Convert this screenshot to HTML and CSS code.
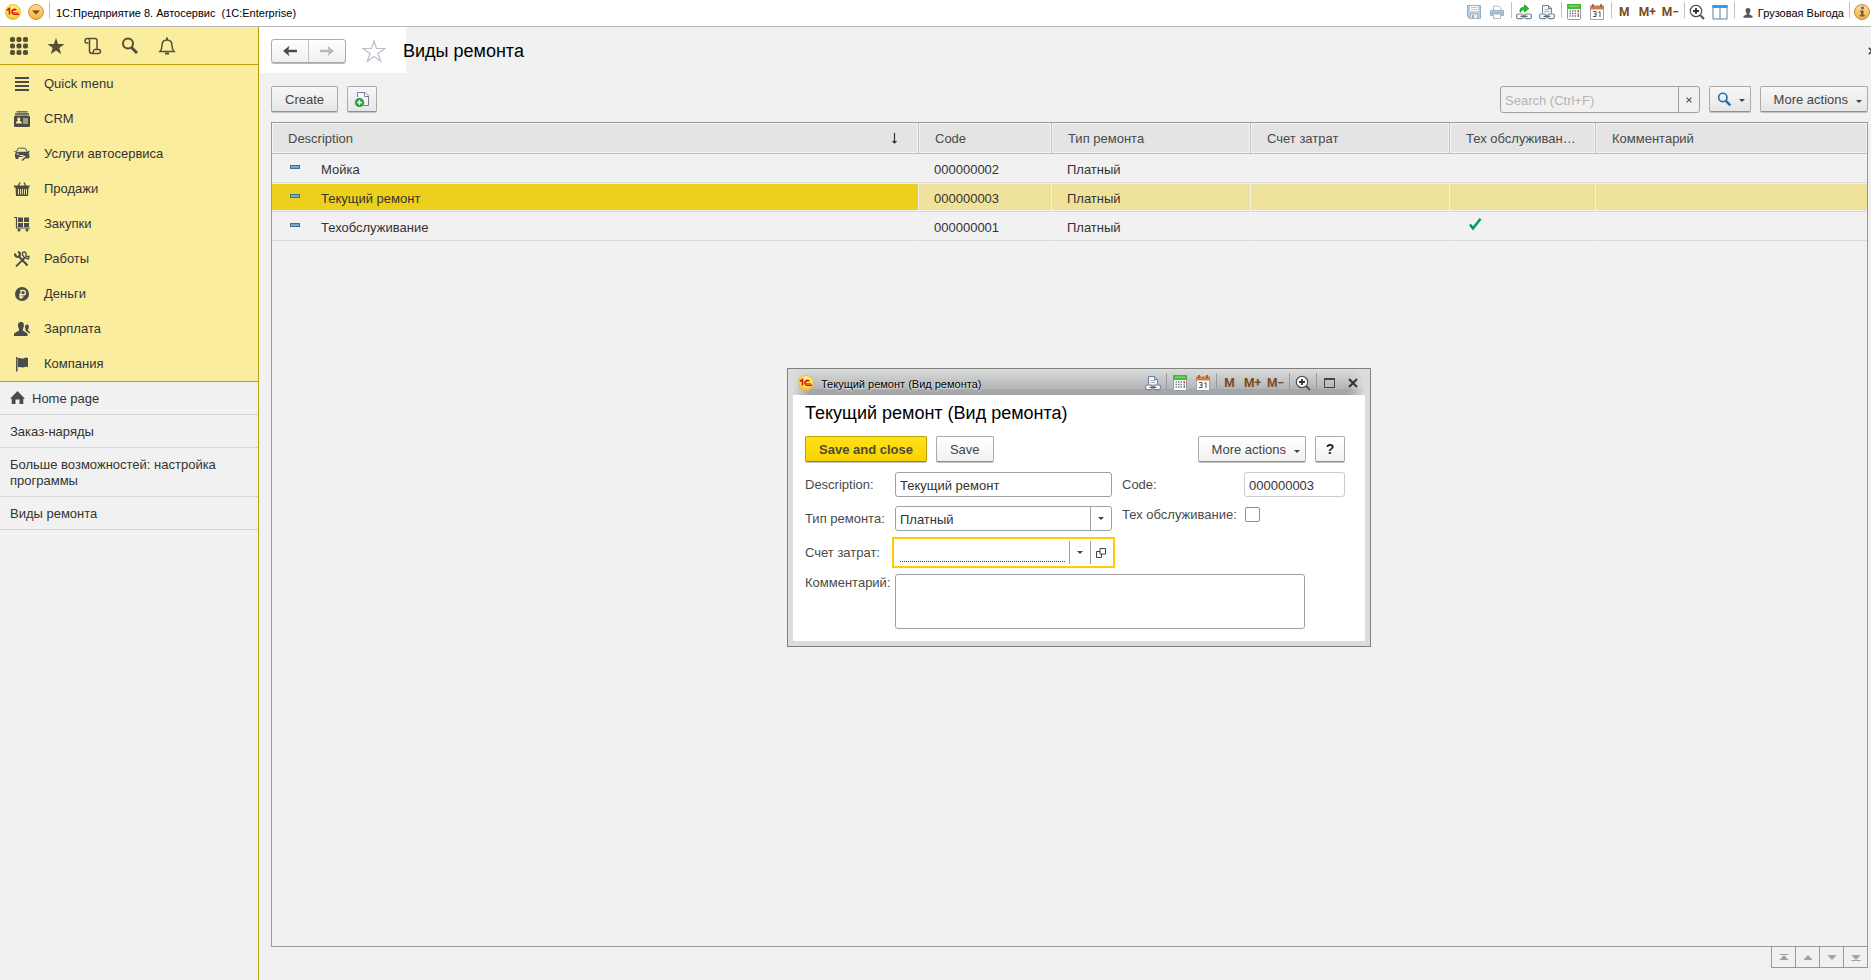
FILE: index.html
```html
<!DOCTYPE html>
<html lang="ru">
<head>
<meta charset="utf-8">
<title>1С:Предприятие 8. Автосервис</title>
<link rel="stylesheet" href="styles.css">
</head>
<body>
<svg class="defs" aria-hidden="true">
  <defs>
    <radialGradient id="gold" cx="50%" cy="35%" r="65%"><stop offset="0" stop-color="#fffbb0"/><stop offset=".6" stop-color="#ffe64a"/><stop offset="1" stop-color="#f0b428"/></radialGradient>
    <linearGradient id="amber" x1="0" y1="0" x2="0" y2="1"><stop offset="0" stop-color="#ffdc90"/><stop offset="1" stop-color="#f5ae45"/></linearGradient>
    <symbol id="i-logo" viewBox="0 0 16 16"><circle cx="8" cy="8" r="7.5" fill="url(#gold)" stroke="#e3c04c"/><path d="M2 6.200L4.500 4.500V10.500" fill="none" stroke="#e01010" stroke-width="1.700"/><path d="M11.300 6.300A2.500 2.500 0 1 0 8.800 10.300H14" fill="none" stroke="#e01010" stroke-width="1.500"/><path d="M10 7A1.200 1.200 0 1 0 9 8.700H13" fill="none" stroke="#e01010" stroke-width=".8"/></symbol>
    <symbol id="i-drop" viewBox="0 0 16 16"><circle cx="8" cy="8" r="7.500" fill="url(#amber)" stroke="#c99645"/><path d="M4 6.500h8L8 10.500z" fill="#704a20"/></symbol>
    <symbol id="i-save" viewBox="0 0 16 16"><path d="M1.500 1.500h13v13h-11l-2-2z" fill="#b9cfe4" stroke="#96adc4"/><path d="M4 2h8v5H4z" fill="#fff"/><path d="M5 3.500h6M5 5.500h6" stroke="#b6c3d0"/><path d="M4.500 10h7v4.500h-7z" fill="#edf2f7" stroke="#a2b5c8"/><path d="M6 11h2v3H6z" fill="#9cb1c8"/></symbol>
    <symbol id="i-print" viewBox="0 0 16 16"><path d="M4.500 7V2h5l2.500 2.500V7" fill="#fff" stroke="#a9bac8"/><path d="M1.500 6.500h13v5h-13z" fill="#b6c9d8" stroke="#9cafbf"/><path d="M4.500 10h7v4.500h-7z" fill="#fff" stroke="#a9bac8"/><path d="M1 9h14" stroke="#93a9ba"/></symbol>
    <symbol id="i-golink" viewBox="0 0 16 16"><rect x=".6" y="10" width="6.600" height="4.600" rx="1.500" fill="#fff" stroke="#718196" stroke-width="1.200"/><rect x="8.800" y="10" width="6.600" height="4.600" rx="1.500" fill="#fff" stroke="#718196" stroke-width="1.200"/><path d="M4.500 12.300h7" stroke="#526478" stroke-width="1.300"/><path d="M4 8C3.500 4 6 3.200 8.500 3.200V.8L12.800 4.500 8.500 8V5.800C6.500 5.600 5 6 4.800 8z" fill="#24c524" stroke="#168a16" stroke-width=".8"/></symbol>
    <symbol id="i-doclink" viewBox="0 0 16 16"><path d="M3.500 9.500V1.500h6L12.500 4.500V9.500" fill="#f5f8fb" stroke="#718196"/><path d="M9.500 1.500v3h3" fill="none" stroke="#718196"/><path d="M5.500 5.500h5M5.500 7.500h5" stroke="#a7b4c2"/><rect x=".6" y="10" width="6.600" height="4.600" rx="1.500" fill="#fff" stroke="#718196" stroke-width="1.200"/><rect x="8.800" y="10" width="6.600" height="4.600" rx="1.500" fill="#fff" stroke="#718196" stroke-width="1.200"/><path d="M4.500 12.300h7" stroke="#526478" stroke-width="1.300"/></symbol>
    <symbol id="i-calc" viewBox="0 0 16 16"><rect x="1.500" y=".5" width="13" height="15" rx="1" fill="#fff" stroke="#8f9ba5"/><path d="M1 0h14v5H1z" fill="#45b83c"/><path d="M3 1.500h10v1.500H3z" fill="#74dc64"/><g stroke="#73808b" stroke-width="1.500" stroke-dasharray="1.500 1"><path d="M3.500 7h7M3.500 9.500h7M3.500 12h7"/></g><path d="M11.500 6h1.500v2.500h-1.500z" fill="#ee3b2b"/><path d="M11.500 9.500h1.500V13h-1.500z" fill="#73808b"/></symbol>
    <symbol id="i-cal" viewBox="0 0 16 16"><path d="M1.500 3.500h13v12h-13z" fill="#fff" stroke="#9aa5b0"/><path d="M1 1.500h14v4H1z" fill="#c8814e"/><path d="M4 0v3M12 0v3" stroke="#8d5228" stroke-width="1.500"/><path d="M4 7.500h3v2.500H5M7 10v2.500H4M9.500 8.500l1.500-1v5.500" fill="none" stroke="#49545e"/></symbol>
    <symbol id="i-zoom" viewBox="0 0 16 16"><circle cx="7" cy="7" r="5.700" fill="#fff" stroke="#505050" stroke-width="1.200"/><path d="M4 7h6M7 4v6" stroke="#303030" stroke-width="1.800"/><path d="M11.300 11.300L15 15" stroke="#505050" stroke-width="2"/></symbol>
    <symbol id="i-panes" viewBox="0 0 16 16"><path d="M1 1.500h14v13.500H1z" fill="#fff" stroke="#62809a"/><path d="M8 3v12" stroke="#62809a"/><path d="M.5 1h15v3H.5z" fill="#2d9cf0"/></symbol>
    <symbol id="i-user" viewBox="0 0 10 10"><path d="M5 0C7 0 7.800 1.500 7.300 3.500L6.300 5.500v1L9.500 8V9.800H.5V8L3.700 6.500V5.500L2.700 3.500C2.200 1.500 3 0 5 0z" fill="#575757"/></symbol>
    <symbol id="i-info" viewBox="0 0 16 16"><circle cx="8" cy="8" r="7.500" fill="url(#amber)" stroke="#c08a35"/><circle cx="8.500" cy="4" r="1.400" fill="#5f6064"/><path d="M6.300 6.500h3.200V11h1.200v1.500H5.800V11H7V8h-.8z" fill="#5f6064"/></symbol>
    <symbol id="i-grid" viewBox="0 0 18 18"><g fill="#564f36"><rect x="0" y="0" width="5" height="5" rx="1.800"/><rect x="6.500" y="0" width="5" height="5" rx="1.800"/><rect x="13" y="0" width="5" height="5" rx="1.800"/><rect x="0" y="6.500" width="5" height="5" rx="1.800"/><rect x="6.500" y="6.500" width="5" height="5" rx="1.800"/><rect x="13" y="6.500" width="5" height="5" rx="1.800"/><rect x="0" y="13" width="5" height="5" rx="1.800"/><rect x="6.500" y="13" width="5" height="5" rx="1.800"/><rect x="13" y="13" width="5" height="5" rx="1.800"/></g></symbol>
    <symbol id="i-star" viewBox="0 0 18 18"><path d="M9 1l2.100 6H17.500l-5.200 3.900 2 6.300L9 13.400 3.700 17.200l2-6.300L.5 7H6.900z" fill="#564f36"/></symbol>
    <symbol id="i-scroll" viewBox="0 0 18 18"><path d="M4.500 6H2.500C.5 6 .5 1.500 3 1.500H11C12.500 1.500 13 2.500 13 4V12M5 2C6 3 5.500 5 5.500 6.500V14C5.500 16 6.500 16.500 8 16.500H14.500C17 16.500 17 12.500 15 12.500H10.500C9.500 12.500 9.500 15.500 8.500 16.300" fill="none" stroke="#564f36" stroke-width="1.500"/></symbol>
    <symbol id="i-search" viewBox="0 0 18 18"><circle cx="7" cy="6.500" r="5" fill="none" stroke="currentColor" stroke-width="2"/><path d="M10.500 10.500L16 16" stroke="currentColor" stroke-width="3"/></symbol>
    <symbol id="i-bell" viewBox="0 0 18 18"><path d="M2 14.500C4 12.500 4 11 4 8.500 4 4.500 6 3 9 3s5 1.500 5 5.500c0 2.500 0 4 2 6z" fill="none" stroke="#564f36" stroke-width="1.500"/><path d="M9 .500V3M7 16.500h4" stroke="#564f36" stroke-width="2"/></symbol>
    <symbol id="i-lines" viewBox="0 0 16 16"><path d="M1 2h14M1 6h14M1 10h14M1 14h14" stroke="#4b4b4b" stroke-width="1.800"/></symbol>
    <symbol id="i-crm" viewBox="0 0 16 16"><path d="M2.500 .8h11M1 3h14" stroke="#4b4b4b" stroke-width="1.300"/><rect x="0" y="4.500" width="16" height="11.500" rx="1.500" fill="#4b4b4b"/><path d="M4.800 6.500c1.800 0 1.800 2.300 1 3.300l2 1.200v1.500H2V11l1.800-1.200c-.8-1-.8-3.300 1-3.300z" fill="#fcec9c"/><path d="M9 8h5M9 10h5M9 12h5" stroke="#fcec9c"/></symbol>
    <symbol id="i-car" viewBox="0 0 16 16"><path d="M2.500 5.500L4 2.500C4.500 2 11 2 11.500 2.500L13 5.500" fill="none" stroke="#4b4b4b"/><path d="M0 4.500l2 1.300h11l2.500-1.300V6L14.500 7.500l1 1-1 2.500-3-1.500-4 1.500H4.500v2H1.500v-2L1 11V8l1-1.500L0 5.500z" fill="#4b4b4b"/><path d="M8 14.500l4-3.500M11 9.500c1.500-.5 2 1 1.500 2 1 .500 2.500 0 2.800-1.200" fill="none" stroke="#4b4b4b" stroke-width="1.500"/><path d="M2.500 8h2.500M5.500 9.500h4" stroke="#fcec9c"/></symbol>
    <symbol id="i-basket" viewBox="0 0 16 16"><path d="M4 5.500L6 1.500M12 5.500L10 1.500" stroke="#4b4b4b" stroke-width="1.300"/><path d="M0 4.500h15.500v2H14.500L14 15H2L1.500 6.500H0z" fill="#4b4b4b"/><path d="M4.500 8v5.500M6.500 8v5.500M8.500 8v5.500M10.500 8v5.500M12.500 8v5.500" stroke="#fcec9c" stroke-width=".9"/></symbol>
    <symbol id="i-cart" viewBox="0 0 16 16"><path d="M0 1.500h2.500v10.500H16" fill="none" stroke="#4b4b4b" stroke-width="1.200"/><path d="M4 1.500h5v4.500H4zM10 1.500h5v4.500h-5zM4 7h5v4H4zM10 7h5v4h-5z" fill="#4b4b4b"/><circle cx="5" cy="14" r="1.500" fill="#4b4b4b"/><circle cx="13" cy="14" r="1.500" fill="#4b4b4b"/></symbol>
    <symbol id="i-tools" viewBox="0 0 16 16"><path d="M1 2.500C.8 5 3 6.500 5 5.500L13.500 14.500M4 .800C6 1.500 6.500 3.500 5.300 5.200" fill="none" stroke="#4b4b4b" stroke-width="2.200"/><path d="M2 15.500L10.500 7" stroke="#4b4b4b" stroke-width="1.800"/><path d="M8.500 4V1.500L10.500 .8 12 2v3.500L15 5.500 14.500 8 12 7.500 10 6z" fill="none" stroke="#4b4b4b" stroke-width="1.300"/></symbol>
    <symbol id="i-rub" viewBox="0 0 16 16"><circle cx="8" cy="8" r="7" fill="#4b4b4b"/><path d="M7 13V4.500h2.200c3 0 3 4.300 0 4.300H5M5 11h4.500" fill="none" stroke="#fcec9c" stroke-width="1.400"/></symbol>
    <symbol id="i-people" viewBox="0 0 16 16"><path d="M7 1c3 0 3.200 2.500 2.700 5L8.800 8v1.500L13.500 12.500V15H0V12.500L5 9.500V8L4.200 6C3.700 3.500 4 1 7 1zM13 3.500c2 0 2 2 1.700 3.500L14 8.500V9.500l2 1.500v1.500L12.500 10.500l-1-1V8l-.5-2c-.3-1 .5-2.500 2-2.500z" fill="#4b4b4b"/></symbol>
    <symbol id="i-flag" viewBox="0 0 16 16"><path d="M2.800 1v14.500" stroke="#4b4b4b" stroke-width="1.500"/><path d="M4 2.200c2-1 3.700 1.300 6 0 1.500-1 3-.8 4 0v9c-1.500-.8-2.800-.5-4 0-2 1-4-1-6 .3z" fill="#4b4b4b"/></symbol>
    <symbol id="i-home" viewBox="0 0 15 14"><path d="M7.500 0L15 7.800H13.300V13H9.500V8.500h-4V13H1.700V7.800H0z" fill="#4b4b4b"/></symbol>
    <symbol id="i-back" viewBox="0 0 16 12"><path d="M1 6L7.500 .8 6.300 4.700H15v2.600H6.300L7.500 11.200z" fill="currentColor"/></symbol>
    <symbol id="i-fav" viewBox="0 0 24 24"><path d="M12 2l2.500 7.500H23l-7 5 2.700 7.700L12 17.500l-6.700 4.700L8 14.500l-7-5h8.500z" fill="#fff" stroke="#b9bfc5" stroke-width="1.200"/></symbol>
    <symbol id="i-copy" viewBox="0 0 16 16"><path d="M3.500 6V1.500h7.500L14.500 5v9.500H9" fill="#f5f7fa" stroke="#6f8094"/><path d="M10.500 1.500V5.500h4" fill="#fff" stroke="#6f8094"/><circle cx="5.500" cy="11.500" r="4.300" fill="#26a339" stroke="#158428" stroke-width=".6"/><path d="M3 11.500h5M5.500 9v5" stroke="#fff" stroke-width="1.300"/></symbol>
    <symbol id="i-check" viewBox="0 0 14 14"><path d="M2 7.500L5 11.500 12.500 1.800" fill="none" stroke="#009c4f" stroke-width="2.500"/></symbol>
    <symbol id="i-x" viewBox="0 0 10 10"><path d="M1 1l8 8M9 1L1 9" stroke="currentColor" stroke-width="2"/></symbol>
    <symbol id="i-open" viewBox="0 0 10 10"><path d="M4 .5h5.500V6H4zM4 3.500H.500v6h5V6" fill="none" stroke="#404040"/></symbol>
  </defs>
</svg>

<header class="topbar">
  <svg class="i16"><use href="#i-logo"/></svg>
  <button class="icon-btn" aria-label="Меню"><svg class="i16"><use href="#i-drop"/></svg></button>
  <span class="sep"></span>
  <span class="app-title">1С:Предприятие 8. Автосервис&nbsp; (1C:Enterprise)</span>
  <nav class="tools">
    <button class="icon-btn" aria-label="Save"><svg class="i16"><use href="#i-save"/></svg></button>
    <button class="icon-btn" aria-label="Print"><svg class="i16"><use href="#i-print"/></svg></button>
    <span class="sep"></span>
    <button class="icon-btn" aria-label="Go to link"><svg class="i16"><use href="#i-golink"/></svg></button>
    <button class="icon-btn" aria-label="Get link"><svg class="i16"><use href="#i-doclink"/></svg></button>
    <span class="sep"></span>
    <button class="icon-btn" aria-label="Calculator"><svg class="i16"><use href="#i-calc"/></svg></button>
    <button class="icon-btn" aria-label="Calendar"><svg class="i16"><use href="#i-cal"/></svg></button>
    <span class="sep"></span>
    <button class="icon-btn mem">M</button>
    <button class="icon-btn mem">M+</button>
    <button class="icon-btn mem">M−</button>
    <span class="sep"></span>
    <button class="icon-btn" aria-label="Zoom"><svg class="i16"><use href="#i-zoom"/></svg></button>
    <button class="icon-btn" aria-label="Panels"><svg class="i16"><use href="#i-panes"/></svg></button>
    <span class="sep"></span>
    <button class="user"><svg class="i10"><use href="#i-user"/></svg>Грузовая Выгода</button>
    <span class="sep"></span>
    <button class="icon-btn info" aria-label="Info"><svg class="i16"><use href="#i-info"/></svg></button>
  </nav>
</header>

<div class="shell">
  <aside class="sidebar">
    <div class="quick">
      <button aria-label="Sections"><svg class="i18"><use href="#i-grid"/></svg></button>
      <button aria-label="Favorites"><svg class="i18"><use href="#i-star"/></svg></button>
      <button aria-label="History"><svg class="i18"><use href="#i-scroll"/></svg></button>
      <button aria-label="Search"><svg class="i18"><use href="#i-search"/></svg></button>
      <button aria-label="Notifications"><svg class="i18"><use href="#i-bell"/></svg></button>
    </div>
    <nav class="menu">
      <a href="#"><svg class="i16"><use href="#i-lines"/></svg>Quick menu</a>
      <a href="#"><svg class="i16"><use href="#i-crm"/></svg>CRM</a>
      <a href="#"><svg class="i16"><use href="#i-car"/></svg>Услуги автосервиса</a>
      <a href="#"><svg class="i16"><use href="#i-basket"/></svg>Продажи</a>
      <a href="#"><svg class="i16"><use href="#i-cart"/></svg>Закупки</a>
      <a href="#"><svg class="i16"><use href="#i-tools"/></svg>Работы</a>
      <a href="#"><svg class="i16"><use href="#i-rub"/></svg>Деньги</a>
      <a href="#"><svg class="i16"><use href="#i-people"/></svg>Зарплата</a>
      <a href="#"><svg class="i16"><use href="#i-flag"/></svg>Компания</a>
    </nav>
    <nav class="windows">
      <a href="#"><svg class="home"><use href="#i-home"/></svg>Home page</a>
      <a href="#">Заказ-наряды</a>
      <a href="#">Больше возможностей: настройка программы</a>
      <a href="#">Виды ремонта</a>
    </nav>
  </aside>

  <main class="main">
    <div class="page-head">
      <div class="history">
        <button aria-label="Back"><svg class="arrow"><use href="#i-back"/></svg></button>
        <button aria-label="Forward" class="off"><svg class="arrow flip"><use href="#i-back"/></svg></button>
      </div>
      <button class="fav" aria-label="Favorite"><svg><use href="#i-fav"/></svg></button>
      <h1>Виды ремонта</h1>
      <button class="close-page" aria-label="Close"><svg><use href="#i-x"/></svg></button>
    </div>
    <div class="commands">
      <button class="btn">Create</button>
      <button class="btn square" aria-label="Copy"><svg class="i16"><use href="#i-copy"/></svg></button>
      <div class="search">
        <input type="text" placeholder="Search (Ctrl+F)" aria-label="Search">
        <button aria-label="Clear"><svg><use href="#i-x"/></svg></button>
      </div>
      <button class="btn find" aria-label="Find"><svg><use href="#i-search"/></svg><span class="caret"></span></button>
      <button class="btn more">More actions<span class="caret low"></span></button>
    </div>
    <div class="list">
      <table>
        <colgroup><col class="c-desc"><col class="c-code"><col class="c-type"><col class="c-type"><col class="c-tech"><col></colgroup>
        <thead>
          <tr><th><span class="sorted">Description<svg class="sort" viewBox="0 0 7 11"><path d="M3.500 0v10M1.500 8l2 2 2-2" fill="none" stroke="#333" stroke-width="1.200"/></svg></span></th><th>Code</th><th>Тип ремонта</th><th>Счет затрат</th><th>Тех обслуживан…</th><th>Комментарий</th></tr>
        </thead>
        <tbody>
          <tr><td><span class="mark"></span>Мойка</td><td>000000002</td><td>Платный</td><td></td><td></td><td></td></tr>
          <tr class="current"><td><span class="mark"></span>Текущий ремонт</td><td>000000003</td><td>Платный</td><td></td><td></td><td></td></tr>
          <tr><td><span class="mark"></span>Техобслуживание</td><td>000000001</td><td>Платный</td><td></td><td><svg class="tick"><use href="#i-check"/></svg></td><td></td></tr>
        </tbody>
      </table>
    </div>
    <div class="pager">
      <button aria-label="First"><svg viewBox="0 0 10 7"><path d="M.5 .5h9" stroke="#a0a0a0"/><path d="M5 1l4.500 5H.5z"/></svg></button>
      <button aria-label="Previous"><svg viewBox="0 0 10 7"><path d="M5 1l4.500 5H.5z"/></svg></button>
      <button aria-label="Next"><svg viewBox="0 0 10 7"><path d="M5 6L.5 1h9z"/></svg></button>
      <button aria-label="Last"><svg viewBox="0 0 10 7"><path d="M.5 6.500h9" stroke="#a0a0a0"/><path d="M5 6L.5 1h9z"/></svg></button>
    </div>
  </main>
</div>

<section class="dialog" role="dialog" aria-labelledby="dlg-title">
  <div class="titlebar">
    <svg class="i16"><use href="#i-logo"/></svg>
    <span class="caption">Текущий ремонт (Вид ремонта)</span>
    <div class="tools">
      <button class="icon-btn" aria-label="Get link"><svg class="i16"><use href="#i-doclink"/></svg></button>
      <span class="sep"></span>
      <button class="icon-btn" aria-label="Calculator"><svg class="i16"><use href="#i-calc"/></svg></button>
      <button class="icon-btn" aria-label="Calendar"><svg class="i16"><use href="#i-cal"/></svg></button>
      <span class="sep"></span>
      <button class="icon-btn mem">M</button>
      <button class="icon-btn mem">M+</button>
      <button class="icon-btn mem">M−</button>
      <span class="sep"></span>
      <button class="icon-btn" aria-label="Zoom"><svg class="i16"><use href="#i-zoom"/></svg></button>
      <span class="sep"></span>
      <button class="icon-btn" aria-label="Maximize"><span class="maximize"></span></button>
      <button class="icon-btn" aria-label="Close"><svg class="i10"><use href="#i-x"/></svg></button>
    </div>
  </div>
  <form class="body">
    <h2 id="dlg-title">Текущий ремонт (Вид ремонта)</h2>
    <div class="form-cmds">
      <button type="button" class="btn primary">Save and close</button>
      <button type="button" class="btn white">Save</button>
      <button type="button" class="btn white more">More actions<span class="caret low"></span></button>
      <button type="button" class="btn white square help">?</button>
    </div>
    <div class="fields">
      <div class="col">
        <label for="f-desc">Description:</label>
        <input class="box" id="f-desc" type="text" value="Текущий ремонт">
        <label for="f-type">Тип ремонта:</label>
        <div class="box combo"><select id="f-type"><option>Платный</option></select><span class="arrow-cell"><span class="caret"></span></span></div>
        <label for="f-acc">Счет затрат:</label>
        <div class="box combo focus"><input id="f-acc" type="text"><button type="button" class="arrow-cell" aria-label="Select"><span class="caret"></span></button><button type="button" class="arrow-cell" aria-label="Open"><svg class="i10"><use href="#i-open"/></svg></button></div>
      </div>
      <div class="col side">
        <label for="f-code">Code:</label>
        <input class="box pale" id="f-code" type="text" value="000000003">
        <label for="f-tech" class="tech">Тех обслуживание:</label>
        <input id="f-tech" type="checkbox">
      </div>
    </div>
    <div class="note">
      <label for="f-note">Комментарий:</label>
      <textarea class="box" id="f-note"></textarea>
    </div>
  </form>
</section>
</body>
</html>
```
FILE: styles.css
```css
* { box-sizing: border-box; }
html, body { height: 100%; }
body {
  margin: 0;
  display: flex;
  flex-direction: column;
  overflow: hidden;
  position: relative;
  background: #f1f1f1;
  color: #333;
  font: 13px/16px "Liberation Sans", Arial, sans-serif;
}
button, input, select, textarea { font: inherit; color: inherit; margin: 0; }
button { padding: 0; border: 0; background: none; }
a { color: inherit; text-decoration: none; }
svg { display: block; flex: none; }
.defs { position: absolute; width: 0; height: 0; }
.i16 { width: 16px; height: 16px; }
.i18 { width: 18px; height: 18px; }
.i10 { width: 10px; height: 10px; }

/* Application bar */
.topbar {
  display: flex;
  align-items: center;
  flex: none;
  height: 27px;
  padding: 0 0 2px 5px;
  background: #fff;
  border-bottom: 1px solid #b8b8b8;
}
.topbar > .icon-btn { margin-left: 3px; }
.app-title { margin-left: 5px; padding-top: 2px; }
.app-title, .user, .caption { font-size: 11px; color: #000; white-space: pre; }
.icon-btn {
  display: flex;
  align-items: center;
  justify-content: center;
  flex: none;
  width: 23px;
  height: 20px;
}
.sep { flex: none; width: 1px; height: 16px; margin: 0 1px 4px 2px; background: #c0c0c0; }
.tools { display: flex; align-items: center; margin-left: auto; }
.mem { font: bold 12px/16px Roboto, sans-serif; color: #7a4a22; }
.user { display: flex; align-items: center; gap: 5px; padding: 2px 3px 0 7px; }
.info { width: 20px; }
.topbar .tools .info { justify-content: flex-end; padding-right: 1px; }

.shell { display: flex; flex: 1; min-height: 0; }

/* Section panel */
.sidebar { flex: none; width: 259px; border-right: 1px solid #b8a010; }
.quick {
  display: flex;
  gap: 19px;
  height: 38px;
  padding: 10px 10px 0;
  background: #fbed9e;
  border-bottom: 1px solid #c0a000;
  color: #564f36;
}
.quick button { height: 18px; }
.menu { padding-top: 1px; background: #fbed9e; border-bottom: 1px solid #c0a000; }
.menu a { display: flex; align-items: center; gap: 14px; height: 35px; padding-left: 14px; }
.windows a {
  display: flex;
  align-items: center;
  gap: 7px;
  padding: 9px 30px 7px 10px;
  border-bottom: 1px solid #d5d5d5;
}
.home { width: 15px; height: 14px; margin-bottom: 2px; }

/* Work area */
.main { display: flex; flex-direction: column; flex: 1; min-width: 0; padding: 0 3px 12px 12px; }
.page-head {
  display: flex;
  align-items: center;
  flex: none;
  height: 46px;
  margin: 0 -3px 0 -12px;
  padding: 2px 0 0 12px;
  background: linear-gradient(#fff, #fff) no-repeat 0 0 / 147px 100%;
}
.history {
  display: flex;
  height: 24px;
  border: 1px solid #ababab;
  border-radius: 3px;
  box-shadow: 0 1px 0 #b8b8b8;
  background: linear-gradient(#fff, #f0f0f0);
}
.history button { display: flex; align-items: center; justify-content: center; width: 36px; color: #4a4a4a; }
.history .off { width: 37px; border-left: 1px solid #c0c0c0; color: #b8b8b8; }
.arrow { width: 16px; height: 12px; }
.flip { transform: scaleX(-1); }
.fav { margin-left: 16px; }
.fav svg { width: 24px; height: 24px; }
h1, h2 { margin: 0; font-size: 18px; line-height: 24px; font-weight: normal; color: #000; }
h1 { margin-left: 17px; }
.close-page { width: 3px; margin-left: auto; overflow: hidden; color: #444; }
.close-page svg { width: 8px; height: 8px; }

.btn {
  display: flex;
  align-items: center;
  justify-content: center;
  flex: none;
  height: 26px;
  padding: 1px 13px 0;
  border: 1px solid #ababab;
  border-bottom-color: #909090;
  border-radius: 2px;
  box-shadow: 0 1px 0 #c4c4c4;
  background: linear-gradient(#f7f7f7, #e6e6e6);
  color: #444;
}
.btn.square { width: 30px; padding: 0; margin-left: 9px; }
.btn.white { background: linear-gradient(#fff, #f1f1f1); }
.btn.primary {
  border-color: #c0a000;
  border-bottom-color: #a08600;
  background: linear-gradient(#ffe11a, #f8d300);
  font-weight: bold;
  color: #4e4a30;
}
.btn.more { width: 108px; justify-content: flex-end; padding: 1px 5px 0 0; gap: 8px; margin-left: 9px; }
.btn.help { font: bold 14px/16px "Liberation Sans", Arial, sans-serif; color: #222; }
.caret { width: 0; border: 3px solid transparent; border-top-color: #444; border-bottom: 0; }
.caret.low { margin-top: 4px; }

.commands { display: flex; flex: none; height: 49px; padding-top: 13px; }
.search {
  display: flex;
  width: 200px;
  height: 27px;
  margin-left: auto;
  border: 1px solid #a0a0a0;
  border-radius: 3px;
}
.search input { flex: 1; min-width: 0; padding: 3px 4px 0; border: 0; background: none; outline: 0; }
.search input::placeholder { color: #b4b4b4; opacity: 1; }
.search button { display: flex; align-items: center; justify-content: center; width: 21px; border-left: 1px solid #a0a0a0; color: #555; }
.search button svg { width: 6px; height: 6px; }
.btn.find { width: 42px; padding: 0 0 0 2px; margin-left: 9px; gap: 7px; color: #2c6ea6; }
.find svg { width: 15px; height: 15px; }
.find .caret { margin-top: 2px; }

/* List */
.list { flex: 1; min-height: 0; border: 1px solid #999; }
table { width: 100%; table-layout: fixed; border-collapse: separate; border-spacing: 0; }
.c-desc { width: 647px; }
.c-code { width: 133px; }
.c-type { width: 199px; }
.c-tech { width: 146px; }
th {
  height: 31px;
  padding: 2px 16px 0;
  border-right: 1px solid #c0c0c0;
  border-bottom: 1px solid #c0c0c0;
  background: #e4e4e4;
  box-shadow: inset 0 0 0 1px #f4f4f4;
  color: #4a4a4a;
  font-weight: normal;
  text-align: left;
  overflow: hidden;
  text-overflow: ellipsis;
  white-space: nowrap;
}
th:last-child, td:last-child { border-right: 0; }
.sorted { display: flex; align-items: center; justify-content: space-between; }
.sort { width: 7px; height: 11px; margin: 0 4px 2px 0; }
td {
  height: 29px;
  padding: 4px 15px 0;
  border-right: 1px solid #f1f1f1;
  border-bottom: 1px solid #d8d8d8;
  background: no-repeat 0 1px / 100% 26px;
}
.current td { background-image: linear-gradient(#efe39b, #efe39b); }
.current td:first-child { background-image: linear-gradient(#ecd01c, #ecd01c); }
td:first-child { padding-left: 18px; }
.mark {
  display: inline-block;
  width: 10px;
  height: 4px;
  margin-right: 21px;
  vertical-align: 5px;
  border: 1px solid #44708f;
  background: #78a8cb;
}
.tick { width: 14px; height: 14px; margin: -9px 0 0 3px; }

.pager { display: flex; align-self: flex-end; flex: none; height: 21px; border: 1px solid #999; border-top: 0; }
.pager button { display: flex; align-items: center; justify-content: center; width: 23px; }
.pager button + button { width: 24px; border-left: 1px solid #999; }
.pager svg { width: 10px; height: 7px; fill: #a0a0a0; }

/* Floating form window */
.dialog {
  position: absolute;
  left: 787px;
  top: 368px;
  width: 584px;
  padding: 0 5px 5px;
  border: 1px solid #808080;
  background: #dcdcdc;
}
.titlebar {
  display: flex;
  align-items: center;
  height: 26px;
  padding: 2px 1px 0 5px;
  background:
    linear-gradient(90deg, #dcdcdc, rgba(220, 220, 220, 0) 16px, rgba(220, 220, 220, 0) calc(100% - 16px), #dcdcdc),
    linear-gradient(#dcdcdc, #b4b5b7 75%, #a6a7a9 76%, #a6a7a9);
}
.caption { margin-left: 7px; padding-top: 1px; text-shadow: 0 1px 2px #fff; }
.titlebar .sep { background: #999; }
.maximize { width: 11px; height: 10px; border: 1px solid #444; border-top-width: 2px; }
.titlebar .i10 { color: #333; }
.body { padding: 6px 20px 12px 12px; background: #fff; color: #4a4a4a; }
.form-cmds { display: flex; margin-top: 11px; }
.form-cmds .btn.white:nth-child(2) { margin-left: 9px; }
.form-cmds .btn.more { margin-left: auto; }
.fields { display: flex; gap: 10px; margin-top: 10px; }
.col { display: grid; grid-template-columns: 90px 217px; grid-auto-rows: 25px; row-gap: 9px; align-items: center; }
.col.side { flex: 1; grid-template-columns: 1fr 101px; }
.box {
  width: 100%;
  height: 25px;
  padding: 2px 4px 0;
  border: 1px solid #a0a0a0;
  border-radius: 3px;
  background: #fff;
  color: #333;
  outline: 0;
}
.box.pale { border-color: #ccc; }
.combo { display: flex; padding: 0; }
.combo select, .combo input { flex: 1; min-width: 0; padding: 2px 4px 0; border: 0; background: none; outline: 0; appearance: none; }
.arrow-cell { display: flex; align-items: center; justify-content: center; width: 21px; border-left: 1px solid #a0a0a0; }
.focus { border-color: transparent; border-radius: 0; box-shadow: 0 0 0 1px #fff, 0 0 0 3px #fc0; }
.focus input { height: 21px; margin: 0 4px; border-bottom: 1px dotted #d00000; }
.tech { align-self: start; padding-top: 1px; }
#f-tech {
  appearance: none;
  width: 15px;
  height: 15px;
  margin: 1px 0 0 1px;
  align-self: start;
  border: 1px solid #909090;
  border-radius: 2px;
  background: #fff;
}
.note { display: flex; margin-top: 9px; }
.note label { width: 90px; padding-top: 1px; }
.note .box { display: block; width: 410px; height: 55px; resize: none; }
```
